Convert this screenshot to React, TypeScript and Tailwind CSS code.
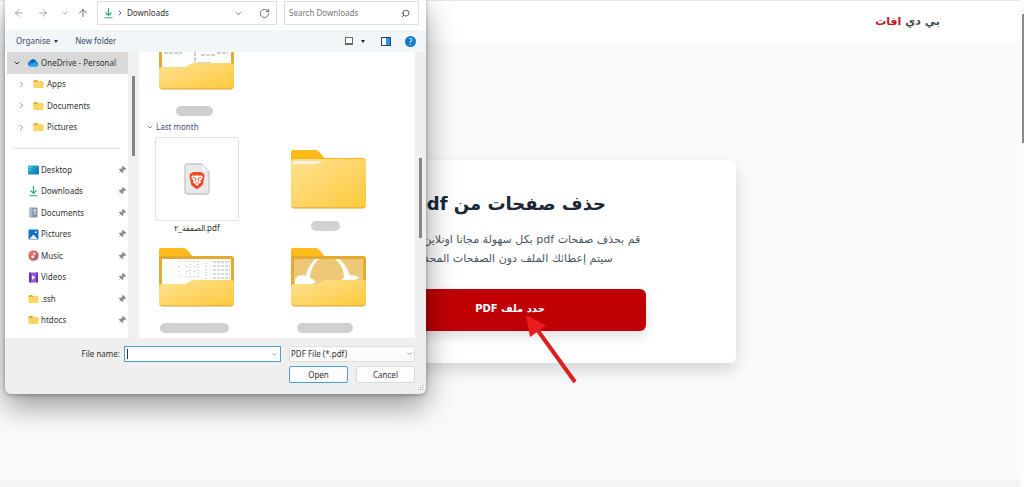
import type { ReactNode } from 'react';
import {
  ArrowLeft,
  ArrowRight,
  ArrowUp,
  ChevronDown,
  ChevronRight,
  Pin,
  RotateCw,
  Search,
} from 'lucide-react';

function MiniFolder() {
  return (
    <svg width="11" height="10" viewBox="0 0 22 20" aria-hidden="true">
      <path d="M1 4a2 2 0 0 1 2-2h5l3 3h8a2 2 0 0 1 2 2v2H1z" fill="#e9a92b" />
      <rect x="1" y="6" width="20" height="12" rx="1.5" fill="#fbd463" />
    </svg>
  );
}

function CloudIcon() {
  return (
    <svg width="12" height="10" viewBox="0 0 24 20" aria-hidden="true">
      <path d="M7 17a5.500 5.500 0 0 1-.8-10.900A7 7 0 0 1 19 7.500A5 5 0 0 1 19 17z" fill="#1480d8" />
      <path d="M3 15.500L14 8.500l8.500 5A4.500 4.500 0 0 1 19 17H7a5 5 0 0 1-4-1.500z" fill="#29a5ee" />
      <path d="M6.200 6.100A7 7 0 0 1 17.500 5.500L11 11z" fill="#0b60b4" />
    </svg>
  );
}

function DownloadIcon() {
  return (
    <svg width="11" height="12" viewBox="0 0 22 24" fill="none" stroke="#27ae84" strokeWidth="2.400" aria-hidden="true">
      <path d="M11 2v15M5 11l6 6 6-6M3 21.500h16" />
    </svg>
  );
}

function DesktopIcon() {
  return (
    <svg width="11" height="10" viewBox="0 0 22 20" aria-hidden="true">
      <defs>
        <linearGradient id="desk" x1="0" y1="0" x2="1" y2="1">
          <stop offset="0" stopColor="#2bc3dc" />
          <stop offset="1" stopColor="#0b6cab" />
        </linearGradient>
      </defs>
      <rect x="0" y="1" width="22" height="18" rx="2" fill="url(#desk)" />
      <path d="M3 4h2v2H3zM3 8h2v2H3z" fill="#d5f7fb" />
    </svg>
  );
}

function DocumentIcon() {
  return (
    <svg width="11" height="11" viewBox="0 0 22 22" aria-hidden="true">
      <rect x="3" y="1" width="16" height="20" rx="2" fill="#8799ad" />
      <path d="M3 3a2 2 0 0 1 2-2h3v20H5a2 2 0 0 1-2-2z" fill="#a9b7c6" />
      <path d="M11 5h5v4h-5zM11 12h5v1.500h-5z" fill="#dfe7ee" />
    </svg>
  );
}

function PictureIcon() {
  return (
    <svg width="11" height="11" viewBox="0 0 22 22" aria-hidden="true">
      <rect x="1" y="1" width="20" height="20" rx="2.500" fill="#1273c4" />
      <path d="M3 20l8-9 8 9z" fill="#e8f5fd" />
      <circle cx="15.500" cy="6.500" r="2" fill="#e8f5fd" />
    </svg>
  );
}

function MusicIcon() {
  return (
    <svg width="11" height="11" viewBox="0 0 22 22" aria-hidden="true">
      <defs>
        <linearGradient id="music" x1="0" y1="0" x2="1" y2="1">
          <stop offset="0" stopColor="#ee8354" />
          <stop offset="1" stopColor="#b64b83" />
        </linearGradient>
      </defs>
      <circle cx="11" cy="11" r="10.500" fill="url(#music)" />
      <circle cx="9.500" cy="14" r="2.700" fill="#fff" />
      <path d="M10.600 5h1.600l3 2.500v2l-3-1.500v6h-1.600z" fill="#fff" />
    </svg>
  );
}

function VideoIcon() {
  return (
    <svg width="11" height="11" viewBox="0 0 22 22" aria-hidden="true">
      <rect x="2" y="1" width="18" height="20" rx="2" fill="#9355dc" />
      <path d="M2 3a2 2 0 0 1 2-2h2v20H4a2 2 0 0 1-2-2zM16 1h2a2 2 0 0 1 2 2v16a2 2 0 0 1-2 2h-2z" fill="#6a30b5" />
      <path d="M8 6.500l7 4.500-7 4.500z" fill="#fff" />
    </svg>
  );
}

function FolderArt({ content }: { content?: 'sheet' | 'arch' | 'pages' }) {
  return (
    <svg width="76" height="60" viewBox="0 0 76 60" className="shrink-0" aria-hidden="true">
      <defs>
        <linearGradient id="front" x1="0" y1="0" x2="1" y2="1">
          <stop offset="0" stopColor="#ffe193" />
          <stop offset="1" stopColor="#fdc93c" />
        </linearGradient>
      </defs>
      <path d="M0 4a3 3 0 0 1 3-3h20c3 0 4 1 6 3l4 5h39a3 3 0 0 1 3 3v40H0z" fill={content ? '#e5aa30' : '#fbb918'} />
      <path d="M0 4a3 3 0 0 1 3-3h20c3 0 4 1 6 3l4 5H0z" fill="#fcba1b" />
      {!content && (
        <>
          <path d="M0 14a4 4 0 0 1 4-4h68a3 3 0 0 1 3 3V56a3 3 0 0 1-3 3H3a3 3 0 0 1-3-3z" fill="url(#front)" />
          <path d="M2 15v-1a2 2 0 0 1 2-2h28c-2 0-4 3-8 3z" fill="#f6f2e8" />
        </>
      )}
      {content && (
        <>
          <rect x="3" y="12" width="69" height="30" fill={content === 'arch' ? '#edc878' : '#fdfdfc'} />
          {content === 'sheet' && (
            <g stroke="#b5b5b5" strokeWidth="1" strokeDasharray="1 2">
              <path d="M20 14v19M28 14v19M35 14v19" strokeDasharray="1 4" />
              <path d="M31 14v18M39 14v18M47 16v17" />
              <path d="M54 15h17M54 19h17M54 23h17M54 27h17M54 31h17" strokeDasharray="3 1" />
            </g>
          )}
          {content === 'pages' && (
            <g fill="none" stroke="#a5a5a5">
              <path d="M5 23h18M36 22v11M38 33h14M42 25h14M58 23h11" strokeDasharray="4 1" />
            </g>
          )}
          {content === 'arch' && (
            <g fill="#fff">
              <path d="M14 33c1-9 5-16 10-21h4c-6 5-9 12-9 21z" />
              <path d="M59 31c-1-8-5-14-11-19h-4c6 5 9 11 9 20z" />
              <path d="M4 32l3-2-2-1 8-1 3 2 6 2 3 3-4 2H4zM52 31l6-3 9 1-2 1 4 1-6 2H50z" />
            </g>
          )}
          <path d="M0 40a3 3 0 0 1 3-3h22c4 0 6-4 9-4h38a3 3 0 0 1 3 3v20a3 3 0 0 1-3 3H3a3 3 0 0 1-3-3z" fill="url(#front)" />
        </>
      )}
      <path d="M1 57.500a3 3 0 0 0 2 1.500h69a3 3 0 0 0 2-1.500" fill="none" stroke="#dba22d" />
    </svg>
  );
}

function PdfFileArt() {
  return (
    <svg width="26" height="32" viewBox="0 0 26 32" aria-hidden="true">
      <path d="M3.500 1h14L25 8.500V28a3 3 0 0 1-3 3H3.500a2.500 2.500 0 0 1-2.500-2.500v-25A2.500 2.500 0 0 1 3.500 1z" fill="#e9e9e9" stroke="#c6c6c6" strokeWidth="1.300" />
      <path d="M17.500 1v5a2.500 2.500 0 0 0 2.500 2.500h5z" fill="#fafafa" stroke="#d6d6d6" strokeWidth=".6" />
      <path d="M9 9h8l1.500 1.300 1.500.2.500 2.500-1.500 8c-.5 1.800-4 4.200-6 5-2-.8-5.500-3.200-6-5L5.500 13 6 10.500l1.500-.2z" fill="#ee4b25" />
      <path d="M8.200 12.500l3 .3 1.800-.5 1.800.5 3-.3 1 2-2.300 3 .3 2-2.300 1.700L13 23l-1.500-1.800-2.300-1.700.3-2-2.300-3z" fill="#fff" />
      <path d="M9 14.500l3 .8-.5 3M17 14.500l-3 .8.500 3M11.500 20.500l1.500-1 1.500 1" fill="none" stroke="#ee4b25" strokeWidth=".9" />
    </svg>
  );
}

const driveFolders = ['Apps', 'Documents', 'Pictures'];

const quickAccess: { name: string; icon: ReactNode }[] = [
  { name: 'Desktop', icon: <DesktopIcon /> },
  { name: 'Downloads', icon: <DownloadIcon /> },
  { name: 'Documents', icon: <DocumentIcon /> },
  { name: 'Pictures', icon: <PictureIcon /> },
  { name: 'Music', icon: <MusicIcon /> },
  { name: 'Videos', icon: <VideoIcon /> },
  { name: '.ssh', icon: <MiniFolder /> },
  { name: 'htdocs', icon: <MiniFolder /> },
];

function Sidebar() {
  return (
    <nav className="flex w-[134px] shrink-0 bg-[#f0f0f0]">
      <div className="w-[123px] bg-white">
        <ul className="grid h-[86px] grid-rows-4">
          <li className="ml-0.5 flex items-center bg-[#d9d9d9] pl-1.5">
            <ChevronDown size={8} strokeWidth={3} className="mr-1.5 text-[#333]" />
            <CloudIcon />
            <span className="ml-0.5">OneDrive - Personal</span>
          </li>
          {driveFolders.map((name) => (
            <li key={name} className="flex items-center pl-3">
              <ChevronRight size={9} strokeWidth={2} className="mr-[7px] text-[#777]" />
              <MiniFolder />
              <span className="ml-[3px]">{name}</span>
            </li>
          ))}
        </ul>
        <hr className="mx-2 mt-2.5 mb-2.5 border-[#dcdcdc]" />
        <ul className="grid h-[172px] grid-rows-8">
          {quickAccess.map((item) => (
            <li key={item.name} className="flex items-center pr-0.5 pl-[23px]">
              {item.icon}
              <span className="ml-0.5 flex-1">{item.name}</span>
              <Pin size={8} fill="#888" strokeWidth={2} className="rotate-45 text-[#888]" />
            </li>
          ))}
        </ul>
      </div>
      <div className="ml-1 mt-6 h-20 w-[3px] bg-[#858585]" />
    </nav>
  );
}

function FileItem({ art, label }: { art: ReactNode; label: ReactNode }) {
  return (
    <div className="flex flex-col items-center">
      <div className="flex h-[84px] items-center">{art}</div>
      {label}
    </div>
  );
}

function FileList() {
  return (
    <div className="flex flex-1 bg-[#efefef]">
      <div className="flex-1 bg-white">
        <div className="flex w-[116px] flex-col items-center">
          <div className="flex h-[38px] items-end overflow-hidden">
            <FolderArt content="pages" />
          </div>
          <div className="mt-4 mr-1.5 h-2.5 w-[37px] rounded-full bg-[#cfcfcf]" />
        </div>
        <div className="mt-px flex h-5 items-center gap-0.5 pl-[7px] text-[#3e4a78]">
          <ChevronDown size={8} strokeWidth={2} />
          Last month
        </div>
        <div className="grid grid-cols-[116px_116px] gap-x-4">
          <FileItem
            art={
              <div className="flex size-[84px] items-center justify-center rounded-xs border border-[#e2e2e2]">
                <PdfFileArt />
              </div>
            }
            label={<span dir="ltr" className="h-3.5 leading-[14px]">الصفقة_٢.pdf</span>}
          />
          <FileItem
            art={<FolderArt />}
            label={<div className="mr-2 h-2.5 w-[29px] rounded-full bg-[#d2d2d2]" />}
          />
          <FileItem
            art={<FolderArt content="sheet" />}
            label={<div className="mt-1 mr-1.5 h-2.5 w-[69px] rounded-full bg-[#cfd0d0]" />}
          />
          <FileItem
            art={<FolderArt content="arch" />}
            label={<div className="mt-1 mr-2 h-2.5 w-[56px] rounded-full bg-[#cfd0d0]" />}
          />
        </div>
      </div>
      <div className="w-[11px] pt-[106px] pl-1">
        <div className="h-20 w-[3px] bg-[#858585]" />
      </div>
    </div>
  );
}

function FileDialog() {
  return (
    <section
      role="dialog"
      aria-label="Open"
      className="absolute top-0 left-[5px] flex w-[421px] flex-col overflow-hidden rounded-b-md bg-[#efefef] font-['Noto_Sans','Liberation_Sans',sans-serif] text-[8px] leading-3 text-[#333] shadow-[0_12px_30px_rgba(0,0,0,0.4),0_1px_4px_rgba(0,0,0,0.3)]"
    >
      <div className="flex h-[30px] bg-white pt-px pr-[7px] pl-2">
        <div className="flex h-6 items-center text-[#888]">
          <button aria-label="Back" className="mr-3"><ArrowLeft size={12} strokeWidth={1.5} /></button>
          <button aria-label="Forward" className="mr-3"><ArrowRight size={12} strokeWidth={1.5} /></button>
          <button aria-label="Recent" className="mr-2"><ChevronDown size={8} strokeWidth={2} /></button>
          <button aria-label="Up" className="mr-2 text-[#666]"><ArrowUp size={12} strokeWidth={2} /></button>
        </div>
        <div className="flex h-6 flex-1 items-center border border-[#dedede] pr-1.5 pl-[5px]">
          <DownloadIcon />
          <ChevronRight size={8} strokeWidth={3} className="mr-[3px] ml-0.5 text-[#666]" />
          <span className="flex-1">Downloads</span>
          <button aria-label="History" className="mr-4 text-[#555]"><ChevronDown size={9} strokeWidth={2} /></button>
          <button aria-label="Refresh" className="text-[#666]"><RotateCw size={11} strokeWidth={2} /></button>
        </div>
        <label className="ml-[7px] flex h-6 w-[135px] items-center border border-[#dedede] pr-2 pl-1">
          <input
            type="text"
            aria-label="Search Downloads"
            placeholder="Search Downloads"
            className="w-0 flex-1 outline-none placeholder:text-[#777]"
          />
          <Search size={9} strokeWidth={2.5} className="-scale-x-100 text-[#555]" />
        </label>
      </div>

      <div className="flex h-[22px] items-center bg-[#f3f6f9] pr-2.5 pl-[11px] text-[#3c4b6b]">
        <button className="flex items-center gap-1">
          Organise
          <span className="border-x-2 border-t-[3px] border-x-transparent border-t-[#2c3a5c]" />
        </button>
        <button className="ml-[17px]">New folder</button>
        <button aria-label="View" className="ml-auto flex items-center gap-2">
          <span className="h-2 w-2 border border-b-2 border-[#666] bg-white" />
          <span className="border-x-2 border-t-[3px] border-x-transparent border-t-[#222]" />
        </button>
        <button aria-label="Preview pane" className="ml-4 flex h-[9px] w-2.5 justify-end border border-[#28415e] bg-white">
          <span className="w-1 bg-[#2698dc]" />
        </button>
        <button aria-label="Help" className="ml-3.5 size-[11px] rounded-full bg-[#0d7dcb] text-center text-[8px] leading-[11px] text-white">?</button>
      </div>

      <div className="flex h-[286px]">
        <Sidebar />
        <FileList />
      </div>

      <form className="grid grid-cols-[1fr_157px_126px] items-center gap-x-2 gap-y-1 pt-2 pr-[11px] pb-[11px]" onSubmit={(e) => e.preventDefault()}>
        <label htmlFor="fileName" className="-mr-1 text-right">File name:</label>
        <div className="flex h-4 items-center border border-[#4da0d4] bg-white px-0.5">
          <span className="h-2.5 w-px bg-[#333]" />
          <input id="fileName" type="text" className="w-0 flex-1 outline-none" />
          <ChevronDown size={7} strokeWidth={2} className="text-[#666]" />
        </div>
        <div className="relative">
          <select aria-label="File type" className="block h-4 w-full appearance-none border border-[#e0e0e0] bg-[#fbfbfb] px-px leading-3">
            <option>PDF File (*.pdf)</option>
          </select>
          <ChevronDown size={7} strokeWidth={2} className="pointer-events-none absolute top-1 right-0.5 text-[#666]" />
        </div>
        <div className="col-start-3 grid grid-cols-2 gap-2">
          <button type="submit" className="h-[17px] rounded-xs border border-[#4da0d4] bg-[#fdfdfd]">Open</button>
          <button type="button" className="h-[17px] rounded-xs border border-[#d8d8d8] bg-[#fdfdfd]">Cancel</button>
        </div>
      </form>
      <svg width="7" height="7" viewBox="0 0 7 7" className="absolute right-0.5 bottom-0.5" fill="#aaa" aria-hidden="true">
        <path d="M5 0h1v1H5zM3 2h1v1H3zM5 2h1v1H5zM1 4h1v1H1zM3 4h1v1H3zM5 4h1v1H5z" />
      </svg>
    </section>
  );
}

function PointerArrow() {
  return (
    <svg width="52" height="70" viewBox="0 0 52 70" className="pointer-events-none absolute top-[314px] left-[525px]" aria-hidden="true">
      <path d="M11 14L50 68" stroke="#dc1f21" strokeWidth="4" />
      <path d="M1 1l20 10.500L5 23z" fill="#ea1c20" />
    </svg>
  );
}

export default function App() {
  return (
    <div className="relative flex min-h-screen overflow-hidden bg-[#f9fafc]">
      <div dir="rtl" className="flex flex-1 flex-col font-['DejaVu_Sans',sans-serif]">
        <header className="flex h-[43px] items-center border-t border-[#e8e8e8] bg-white pr-20">
          <a href="#" className="text-[11px] leading-4 font-bold text-[#3d4450]">
            بي دي <span className="text-[#c4151c]">افات</span>
          </a>
        </header>
        <main className="px-4 pt-[117px]">
          <div className="mx-auto max-w-[452px] rounded-md bg-white px-[90px] pt-7 pb-8 text-center shadow-[0_8px_16px_rgba(0,0,0,0.14)]">
            <h1 className="text-lg leading-8 font-bold whitespace-nowrap text-[#1d2735]">حذف صفحات من pdf</h1>
            <p className="-mx-4 mt-2.5 text-[11px] leading-[19px] whitespace-nowrap text-[#4b5563]">
              قم بحذف صفحات pdf بكل سهولة مجانا اونلاين وبسرعة.
              <br />
              سيتم إعطائك الملف دون الصفحات المحذوفة
            </p>
            <button className="mt-[21px] h-[42px] w-full rounded-md bg-[#bf0005] pb-1 text-[10px] font-bold text-white shadow-[0_6px_12px_rgba(0,0,0,0.12)]">
              حدد ملف PDF
            </button>
          </div>
        </main>
        <footer className="mt-auto h-2 bg-[#f3f4f6]" />
      </div>
      <div className="flex w-1 flex-col items-end bg-[#fcfcfc] pt-3.5">
        <div className="h-[129px] w-0.5 bg-[#8a8a8a]" />
      </div>
      <FileDialog />
      <PointerArrow />
    </div>
  );
}
